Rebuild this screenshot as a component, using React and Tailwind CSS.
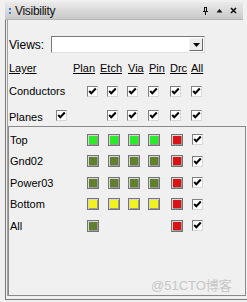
const swatchColors = {
  g: "bg-[#2bea2b]",
  o: "bg-[#60802f]",
  y: "bg-[#f2f21c]",
  r: "bg-[#dc1313]",
};

function Check() {
  return (
    <span className="flex h-[11px] w-[11px] items-center justify-center border border-t-[#808080] border-l-[#808080] border-r-[#d8d8d8] border-b-[#d8d8d8] bg-white">
      <svg width="9" height="9" viewBox="0 0 9 9">
        <path d="M1.2 4 L3.3 6.3 L7.8 1.5" stroke="#000" strokeWidth="2" fill="none" />
      </svg>
    </span>
  );
}

function Swatch({ c }) {
  return (
    <span
      className={`block h-[12px] w-[12px] border border-[#747474] shadow-[inset_1px_1px_0_#d6d6d6,inset_-1px_-1px_0_#9a9a9a] ${swatchColors[c]}`}
    />
  );
}

const layers = [
  { name: "Top", cells: ["g", "g", "g", "g", "r"] },
  { name: "Gnd02", cells: ["o", "o", "o", "o", "r"] },
  { name: "Power03", cells: ["o", "o", "o", "o", "r"] },
  { name: "Bottom", cells: ["y", "y", "y", "y", "r"] },
  { name: "All", cells: ["o", null, null, null, "r"] },
];

export default function App() {
  return (
    <div
      className="relative h-[302px] w-[247px] overflow-hidden bg-[#f0f0f0] pt-[2px] text-[11px] text-black"
      style={{ fontFamily: '"Liberation Sans", Arial, sans-serif' }}
    >
      {/* title bar */}
      <div className="ml-[5px] flex h-[18px] w-[238px] items-center border-b border-[#b4b4b4] bg-[linear-gradient(#eaeaea,#c9c9c9)] pl-[4px] pr-[6px]">
        <span className="mr-[4px] flex flex-col gap-[2px]">
          <span className="block h-[2px] w-[2px] bg-[#3f7fd6]" />
          <span className="block h-[2px] w-[2px] bg-[#3f7fd6]" />
        </span>
        <span className="text-[12px] tracking-[-0.3px] text-[#111]">Visibility</span>
        <div className="ml-auto flex items-center gap-[7px]">
          <svg width="7" height="8" viewBox="0 0 7 8">
            <path d="M2 0.5 H5 M2.5 0.5 V4 M4.5 0.5 V4 M1 4.5 H6 M3.5 4.5 V8" stroke="#111" strokeWidth="1" fill="none" />
          </svg>
          <svg width="7" height="5" viewBox="0 0 7 5">
            <path d="M0.5 4.5 L3.5 1 L6.5 4.5 Z" fill="#111" />
          </svg>
          <svg width="7" height="7" viewBox="0 0 7 7">
            <path d="M1 1 L6 6 M6 1 L1 6" stroke="#111" strokeWidth="1.6" />
          </svg>
        </div>
      </div>

      {/* body */}
      <div className="ml-[5px] h-[280px] border-b border-l border-[#7a7a7a] pl-[1px]">
        <div className="flex h-[276px] flex-col border-l border-[#a0a0a0]">
          {/* views */}
          <div className="mt-[16px] flex h-[17px] items-center">
            <span className="w-[43px] pl-[1px] text-[12px]">Views:</span>
            <div className="flex h-[17px] w-[154px] items-center border border-t-[#7a7a7a] border-l-[#7a7a7a] border-r-[#e0e0e0] border-b-[#e0e0e0] bg-white">
              <div className="ml-auto mr-[1px] flex h-[13px] w-[14px] items-center justify-center border border-t-[#f4f4f4] border-l-[#f4f4f4] border-r-[#6a6a6a] border-b-[#6a6a6a] bg-[#ececec]">
                <svg width="7" height="4" viewBox="0 0 7 4">
                  <path d="M0 0 H7 L3.5 4 Z" fill="#000" />
                </svg>
              </div>
            </div>
          </div>

          {/* header */}
          <div className="mt-[7px] grid h-[14px] grid-cols-[64px_27px_28px_21px_21px_21px_auto] items-center pl-[1px] underline underline-offset-[1px]">
            <span>Layer</span>
            <span>Plan</span>
            <span>Etch</span>
            <span>Via</span>
            <span>Pin</span>
            <span>Drc</span>
            <span>All</span>
          </div>

          {/* conductors */}
          <div className="mt-[6px] grid h-[22px] grid-cols-[78px_20px_20px_21px_22px_21px_11px] items-center pl-[1px]">
            <span>Conductors</span>
            <Check />
            <Check />
            <Check />
            <Check />
            <Check />
            <Check />
          </div>

          {/* planes */}
          <div className="mt-[2px] grid h-[22px] grid-cols-[78px_20px_20px_21px_22px_21px_11px] items-center pl-[1px]">
            <span className="flex items-center">
              <span className="w-[47px] pt-[4px]">Planes</span>
              <Check />
            </span>
            <span />
            <Check />
            <Check />
            <Check />
            <Check />
            <Check />
          </div>

          {/* layers box */}
          <div className="mr-[1px] flex-1 border border-[#8a8a8a] pt-[2px]">
            {layers.map((l) => (
              <div
                key={l.name}
                className="grid h-[21.5px] grid-cols-[77px_21px_20px_20px_23px_21px_11px] items-center pl-[1px]"
              >
                <span>{l.name}</span>
                {l.cells.map((c, i) => (c ? <Swatch key={i} c={c} /> : <span key={i} />))}
                <Check />
              </div>
            ))}
          </div>
        </div>
      </div>

      <span
        className="absolute left-[151px] top-[276px] text-[13px] text-[#c6c6c6]"
        style={{ fontFamily: '"Liberation Sans", "Noto Sans CJK SC", sans-serif' }}
      >
        @51CTO博客
      </span>
    </div>
  );
}
